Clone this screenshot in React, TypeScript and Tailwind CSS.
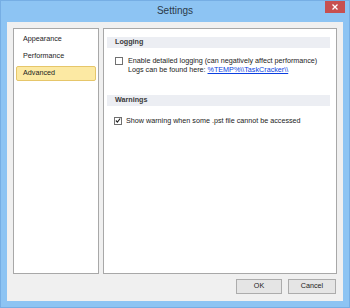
import React from "react";

const font = { fontFamily: '"Liberation Sans", Arial, sans-serif' };

function Checkbox({ checked }: { checked?: boolean }) {
  return (
    <div className="w-[8px] h-[8px] border border-[#707070] bg-white flex items-center justify-center shrink-0">
      {checked && (
        <svg width="7" height="7" viewBox="0 0 7 7">
          <path d="M1 3.5 L2.8 5.3 L6 1.2" stroke="#222" strokeWidth="1.3" fill="none" />
        </svg>
      )}
    </div>
  );
}

function SectionHeader({ title }: { title: string }) {
  return (
    <div className="h-[11px] bg-[#eceef3] ml-[3px] mr-[6px] pl-[8px] flex items-center text-[7.2px] font-semibold text-[#3a3a3a]">
      {title}
    </div>
  );
}

export default function App() {
  const pages = ["Appearance", "Performance", "Advanced"];
  const selected = "Advanced";

  return (
    <div
      className="w-[350px] h-[308px] bg-[#8dc4f3] border border-[#76aee4] flex flex-col overflow-hidden"
      style={font}
    >
      {/* Title bar */}
      <div className="h-[21px] flex items-start relative">
        <div className="flex-1 text-center text-[10px] text-[#2b3a4a] pt-[5px] leading-none">Settings</div>
        <div className="absolute right-[4px] top-[-1px] w-[20px] h-[13px] bg-[#c75050] flex items-center justify-center">
          <svg width="6" height="6" viewBox="0 0 6 6">
            <path d="M0.5 0.5 L5.5 5.5 M5.5 0.5 L0.5 5.5" stroke="white" strokeWidth="1.3" />
          </svg>
        </div>
      </div>

      {/* Client area */}
      <div className="mx-[6px] h-[279px] bg-[#f0f0f0] flex flex-col px-[6px] pt-[6px]">
        <div className="flex gap-[4px] h-[246px]">
          {/* Page list */}
          <div className="w-[86px] bg-white border border-[#a8a8a8] pt-[3px] px-[2px] flex flex-col gap-[2px]">
            {pages.map((p) => (
              <div
                key={p}
                className={
                  p === selected
                    ? "h-[15px] rounded-[2px] border border-[#e6c66a] bg-[#fce9a3] pl-[6px] flex items-center text-[7.2px] text-[#222]"
                    : "h-[15px] border border-transparent pl-[6px] flex items-center text-[7.2px] text-[#222]"
                }
              >
                {p}
              </div>
            ))}
          </div>

          {/* Page content */}
          <div className="flex-1 bg-white border border-[#a8a8a8] pt-[8px]">
            <SectionHeader title="Logging" />
            <div className="flex items-start gap-[5px] pl-[11px] pt-[8px] text-[7.2px] text-[#222] leading-[9px]">
              <div className="pt-[1px]">
                <Checkbox />
              </div>
              <div>
                <div>Enable detailed logging (can negatively affect performance)</div>
                <div>
                  Logs can be found here:{" "}
                  <span className="text-[#0b3fe0] underline">%TEMP%\\TaskCracker\\</span>
                </div>
              </div>
            </div>

            <div className="mt-[21px]">
              <SectionHeader title="Warnings" />
            </div>
            <div className="flex items-center gap-[4px] pl-[10px] pt-[10px] text-[7.2px] text-[#222] leading-[9px]">
              <Checkbox checked />
              <div>Show warning when some .pst file cannot be accessed</div>
            </div>
          </div>
        </div>

        {/* Buttons */}
        <div className="flex justify-end gap-[6px] pt-[5px] pr-[1px]">
          <button className="w-[46px] h-[15px] border border-[#acacac] bg-[#e5e5e5] text-[7.2px] text-[#222] flex items-center justify-center">
            OK
          </button>
          <button className="w-[48px] h-[15px] border border-[#acacac] bg-[#e5e5e5] text-[7.2px] text-[#222] flex items-center justify-center">
            Cancel
          </button>
        </div>
      </div>
    </div>
  );
}
